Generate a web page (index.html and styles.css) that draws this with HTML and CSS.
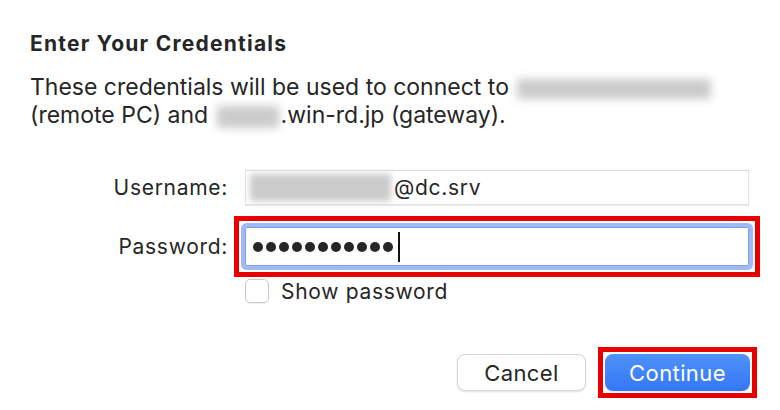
FILE: index.html
```html
<!DOCTYPE html>
<html lang="en">
<head>
  <meta charset="UTF-8" />
  <title>Enter Your Credentials</title>
  <link rel="stylesheet" href="styles.css">
</head>
<body>
  <div class="dialog">
    <div class="title">Enter Your Credentials</div>

    <p class="desc">
      These credentials will be used to connect to <span class="blur blur-pc"></span><br>
      (remote PC) and <span class="blur blur-gw"></span>.win-rd.jp (gateway).
    </p>

    <div class="form">
      <label class="label">Username:</label>
      <div class="field"><span class="blur blur-user"></span>@dc.srv</div>

      <label class="label">Password:</label>
      <div class="mark mark-field">
        <div class="field focused">
          <span class="dot"></span><span class="dot"></span><span class="dot"></span>
          <span class="dot"></span><span class="dot"></span><span class="dot"></span>
          <span class="dot"></span><span class="dot"></span><span class="dot"></span>
          <span class="dot"></span><span class="dot"></span>
          <span class="caret"></span>
        </div>
      </div>

      <div></div>
      <div class="check-row">
        <span class="checkbox"></span>
        <span>Show password</span>
      </div>
    </div>

    <div class="buttons">
      <button class="btn">Cancel</button>
      <span class="mark mark-btn"><button class="btn primary">Continue</button></span>
    </div>
  </div>
</body>
</html>
```

FILE: styles.css
```css
body {
  margin: 0;
  background-color: #ffffff;
  font-family: 'Inter', 'Liberation Sans', sans-serif;
  color: #262626;
}

.dialog {
  padding: 31px 30px 18px 30px;
}

.title {
  font-size: 21px;
  font-weight: bold;
  letter-spacing: 1.25px;
  line-height: 26px;
}

.desc {
  margin: 16px 0 0 0;
  font-size: 23px;
  line-height: 28px;
}

.blur {
  display: inline-block;
  background-color: #cbcbcb;
  filter: blur(4px);
  vertical-align: middle;
}

.blur-pc {
  width: 194px;
  height: 20px;
  margin-left: 2px;
}

.blur-gw {
  width: 62px;
  height: 22px;
  margin: 0 2px 0 2px;
}

.blur-user {
  width: 141px;
  height: 27px;
  margin-right: 3px;
  filter: blur(3px);
}

/* red annotation boxes */
.mark {
  display: block;
  border: 5px solid #e80000;
  padding: 6px;
  margin: -11px;
}

.mark-btn {
  display: flex;
  padding: 2px;
  margin: -7px;
}

.form {
  display: grid;
  grid-template-columns: 198px 504px;
  grid-template-rows: 35px 39px 24px;
  column-gap: 17px;
  row-gap: 22px;
  margin-top: 41px;
  font-size: 21px;
  letter-spacing: 0.7px;
}

.label {
  text-align: right;
  align-self: center;
}

.field {
  height: 35px;
  box-sizing: border-box;
  border: 1px solid #e3e3e3;
  border-top-color: #d9d9d9;
  box-shadow: 0 1px 1px rgba(0,0,0,0.08);
  display: flex;
  align-items: center;
  padding-left: 4px;
}

.mark-field {
  align-self: start;
}

.field.focused {
  height: 39px;
  border: 1px solid #7c9fe9;
  border-radius: 2px;
  box-shadow: 0 0 0 4px #a0baf3;
  padding-left: 7px;
  gap: 3px;
}

.dot {
  width: 10px;
  height: 10px;
  border-radius: 50%;
  background-color: #262626;
}

.caret {
  width: 2px;
  height: 30px;
  background-color: #111111;
  margin-left: 2px;
}

.check-row {
  align-self: start;
  display: flex;
  align-items: center;
  gap: 12px;
  height: 24px;
  margin-top: -9px;
}

.checkbox {
  width: 22px;
  height: 22px;
  border: 1px solid #c9c9c9;
  border-radius: 5px;
  box-shadow: 0 1px 1px rgba(0,0,0,0.06);
}

.buttons {
  display: flex;
  justify-content: flex-end;
  align-items: center;
  gap: 19px;
  margin-top: 42px;
}

.btn {
  font-family: inherit;
  font-size: 22px;
  letter-spacing: 0.4px;
  height: 37px;
  border-radius: 8px;
  border: 1px solid #d6d6d6;
  background-color: #ffffff;
  color: #262626;
  box-shadow: 0 1px 2px rgba(0,0,0,0.12);
  width: 129px;
  padding: 0;
}

.btn.primary {
  width: 145px;
  border: none;
  color: #ffffff;
  background: linear-gradient(#4f92f8, #3477f5);
}
```
